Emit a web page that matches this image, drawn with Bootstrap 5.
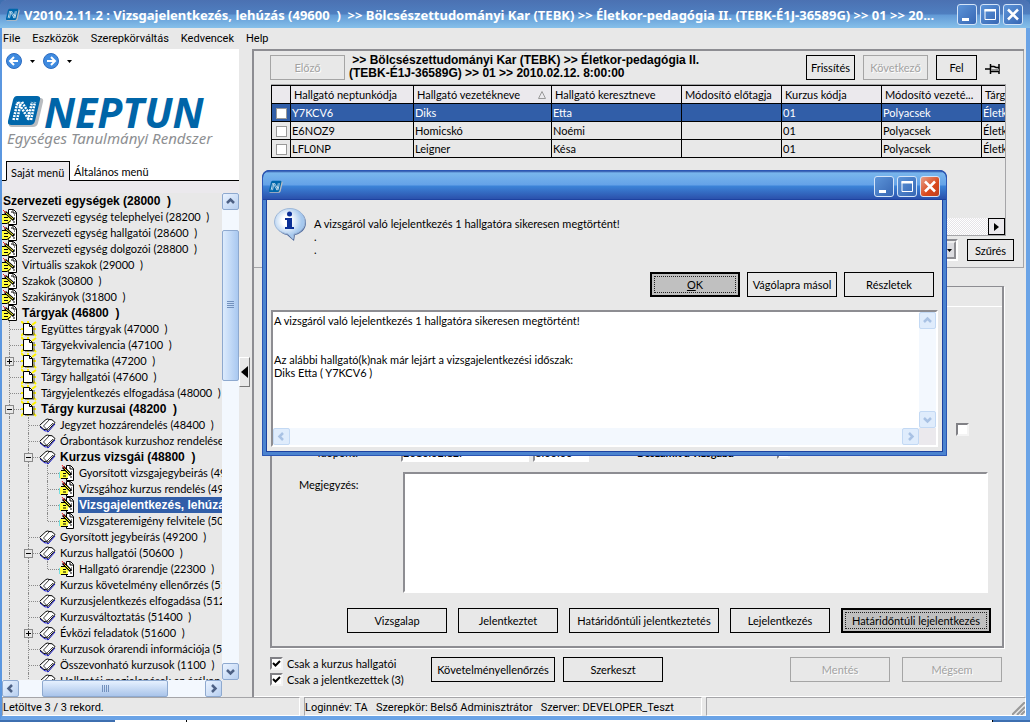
<!DOCTYPE html>
<html lang="hu">
<head>
<meta charset="utf-8">
<meta name="viewport" content="width=device-width, initial-scale=1">
<title>Neptun – Vizsgajelentkezés, lehúzás</title>
<link rel="stylesheet" href="https://cdn.jsdelivr.net/npm/bootstrap@5.3.0/dist/css/bootstrap.min.css">
<script src="https://cdn.jsdelivr.net/npm/bootstrap@5.3.0/dist/js/bootstrap.bundle.min.js"></script>
<style>
:root{--face:#e8e8e8;--panel:#ebe9ed;--shade:#8d8d92;--sel:#315ea8;}
body{font:11px/13px Lato,"Liberation Sans",sans-serif;color:#000;background:#3e6fb0;overflow:hidden}
.win{background:var(--face);border-left:2px solid #5b97e0;border-right:4px solid #6aa3e6;border-bottom:4px solid #6aa3e6;border-radius:8px 8px 0 0;min-height:0}
.win-title{height:28px;margin:0 -4px 0 -2px;padding:2px 7px 0 6px;border-radius:6px 6px 0 0;color:#fff;background:linear-gradient(#4b71b2 0,#4f7fc0 14px,#629ad6 15px,#86c0ea 28px)}
.win-title h1{font:bold 13px/24px "Noto Sans",sans-serif;margin:0;white-space:pre;min-width:0;overflow:hidden}
.ctls{gap:3px}
.ctl{width:20px;height:21px;border:1px solid #d4e4f8;border-radius:3px;padding:0;background:linear-gradient(135deg,#5c94d8,#3767b4);display:block}
.ctl svg{display:block;width:18px;height:19px}
.menubar{height:22px;gap:12px;padding-left:1px;font-family:Roboto,sans-serif}
.menubar a,.side-tabs a{color:#000;text-decoration:none}
.side{width:237px;flex:none}
.side-head{height:114px;background:#fff}
.side-head .ico-btn{background:none;border:0;padding:0;line-height:0}
.brand{padding:2px 0 0 6px}
.brand-name{font:italic bold 41px/32px "Noto Sans",sans-serif;color:#0065a8}
.brand-sub{font:italic 15px/18px "Noto Sans",sans-serif;color:#8d8f92;padding-left:5px;white-space:nowrap}
.side-tabs{background:#fff;height:20px}
.side-tabs>*{border-bottom:1px solid #000;padding:4px 0 0 4px}
.side-tabs .on{border:1px solid #000;border-bottom-color:var(--panel);background:var(--panel);width:64px}
.tree-box{border-top:12px solid var(--panel);min-height:0}
.tree{list-style:none;margin:0;padding:0;overflow:hidden;width:220px;min-height:0}
.tree li{display:flex;height:16px;line-height:16px;white-space:pre}
.tree i{position:relative;flex:none;width:19px;height:16px}
.tree .v::before{content:"";position:absolute;left:7px;top:0;bottom:0;border-left:1px dotted #8a8a8a}
.tree .e::before{bottom:8px}
.tree .h::after{content:"";position:absolute;left:8px;right:0;top:8px;border-top:1px dotted #8a8a8a}
.tree b.x{position:absolute;z-index:1;left:3px;top:4px;width:9px;height:9px;border:1px solid #8a8a8a;background:var(--face)}
.tree b.x::before{content:"";position:absolute;left:1px;top:3px;width:5px;height:1px;background:#000}
.tree b.plus::after{content:"";position:absolute;left:3px;top:1px;width:1px;height:5px;background:#000}
.tree svg{flex:none;width:19px;height:16px;overflow:visible}
.tree span{padding-left:1px}
.tree .strong span{font:bold 12px/16px "Liberation Sans",Arial,sans-serif}
.tree .cur span{background:var(--sel);color:#fff;flex:1 0 auto}
.sb{background:#f3f8fe;flex:none}
.sb.vert{width:17px}.sb.horz{height:17px}
.sb button{width:17px;height:17px;padding:0;border:1px solid #8ea9cf;border-radius:2px;background:linear-gradient(135deg,#eaf3ff,#b7cff0);line-height:0;flex:none;color:#4d6185}
.sb.off button{border-color:#c3d9f4;background:#dfecfc;color:#a9c2e4}
.sb svg{width:15px;height:15px}
.thumb{border:1px solid #8ea9cf;border-radius:2px}
.vert .thumb{background:linear-gradient(90deg,#dcebfd,#a9c8f0);height:151px;margin-top:20px}
.horz .thumb{background:linear-gradient(#e6f1ff,#a9c4ea);width:126px;margin-left:23px}
.side>.horz{width:220px}
.split{width:13px;flex:none}
.split button{width:11px;height:30px;border:1px solid;border-color:#fff #777 #777 #fff;background:var(--face);padding:0;margin-top:308px;line-height:0}
.main{border-top:2px solid var(--shade);border-left:2px solid var(--shade);margin-right:2px;min-width:0}
.top-part{border-right:1px solid #a5a5a8;border-bottom:1px solid #a5a5a8;padding:4px 9px 6px 16px}
.top-row{padding-bottom:4px;margin-right:8px}
.pin{margin:8px 6px 0 8px}
.b{border:1px solid #000;background:var(--face);height:25px;padding:0;font:inherit;color:#000;flex:none}
.b:disabled{border-color:#a5a5a5;color:#a2a2a2;text-shadow:1px 1px #fff}
.b.def{border-width:2px;background:#c0c0c0;outline:1px dotted #222;outline-offset:-5px}
.b.w{width:100px}
.b.xw{width:150px}
.crumb{font:bold 12px/13px "Liberation Sans",Arial,sans-serif;white-space:pre;margin-top:-1px}
.grid-box{border-top:1px solid #a5a5a8;border-right:1px solid #a5a5a8;border-bottom:1px solid #a5a5a8;height:152px;overflow:hidden;margin:0 8px 0 1px}
.grid-box table{table-layout:fixed;width:834px;border-collapse:collapse}
.grid-box th,.grid-box td{border:1px solid #000;height:18px;padding:0 1px;white-space:nowrap;overflow:hidden;line-height:16px;font-weight:normal}
.grid-box th{background:var(--panel);padding-left:3px}
.grid-box .cur td{background:var(--sel);color:#fff}
.grid-box input{appearance:none;display:block;width:11px;height:11px;border:1px solid #999;background:#fff;margin:1px 0 0 3px}
.track{height:17px;background:repeating-conic-gradient(#fff 0 25%,#e6e4e8 0 50%) 0 0/2px 2px}
.track button{width:17px;height:17px;border:1px solid #000;background:var(--panel);padding:0;line-height:0}
.filter-row{padding-top:3px;gap:9px}
.filter{appearance:none;width:300px;height:22px;border:2px solid;border-color:#8d8d92 #fff #fff #8d8d92;border-radius:0;background:#fff}
.combo .arr{position:absolute;right:2px;top:2px;width:13px;height:18px;background:#dcdce0;border:2px solid;border-color:#eee #8d8d92 #8d8d92 #eee;display:flex;align-items:center;justify-content:center}
.sunk{border:2px solid;border-color:#8d8d92 #fff #fff #8d8d92;background:#fff;border-radius:0;padding:0}
.group{margin:18px 20px 0 16px;border:2px solid var(--shade);box-shadow:1px 1px #fff;border-top-width:1px}
.tabline{height:20px;border-bottom:1px solid #fff}
.date-row{padding-top:6px}
.date-row input{height:20px}
.note-row{padding-top:10px}
.note-row label{width:131px;padding:6px 0 0 27px}
.note{height:121px;resize:none;display:block;width:585px}
.act-row{padding:15px 11px 5px 0;gap:11px}
.chk{appearance:none;width:13px;height:13px;margin:0;background:#fff;border:2px solid;border-color:#808085 #f4f4f4 #f4f4f4 #808085;flex:none}
.date-row .chk{height:13px}
.chk:checked{background:#fff url("data:image/svg+xml,%3Csvg xmlns='http://www.w3.org/2000/svg' viewBox='0 0 9 9'%3E%3Cpath d='M1 4l2.500 2.500L8 2' fill='none' stroke='%23000' stroke-width='2'/%3E%3C/svg%3E") center/9px no-repeat}
.foot{padding:9px 22px 7px 16px;border-bottom:1px solid #fff}
.foot label{height:16px}
.status{height:19px;white-space:pre;font-family:Roboto,sans-serif;line-height:19px}
.status>div{border:1px solid;border-color:#a5a5a8 #fff #fff #a5a5a8}
.desk{height:2px;background:#3e6fb0}
.desk div{background:#fff;border-right:1px solid #000}
.dlg{position:absolute;left:262px;top:170px;width:685px;height:286px;background:var(--face);border:4px solid #4b83cf;border-top:0;border-radius:8px 8px 0 0;box-shadow:inset 0 0 0 1px #1d42a0;outline:1px solid #2c56b4;outline-offset:-1px}
.dlg-title{height:30px;margin:0 -4px;padding:5px 6px 0;border-radius:7px 7px 0 0;background:linear-gradient(#2a50a8 0,#79b6ec 2px,#64a2e8 14px,#3c84d8 15px,#2a4da8 29px);border:1px solid #2a50a8;border-bottom-color:#1d42a0}
.dlg .ctl.close{background:linear-gradient(135deg,#e79f88,#d9481c 60%,#c04020)}
.dlg .b{width:90px}
.dlg-text{padding-top:9px}
.dlg-btns{gap:7px;margin:0 9px 13px}
.msg-box{height:137px;margin:0 5px 5px}
.msg-box textarea{border:0;resize:none;padding:2px 0 0 1px;font:inherit;overflow:hidden;outline:0;display:block}
.corner{width:17px;height:17px;background:var(--panel)}
</style>
</head>
<body class="d-flex flex-column vh-100">
<svg width="0" height="0" class="position-absolute" aria-hidden="true">
<symbol id="neptun" viewBox="0 0 36 34"><path d="M10 3h22q4 0 3 4l-5 21q-1 4-5 4H4q-4 0-3-4" fill="#b9bcc0"/><path d="M9 1h20q4 0 3 4l-5 21q-1 4-5 4H3q-4 0-3-4L5 5q1-4 4-4z" fill="#0067ab"/><g fill="none" stroke="#fff" stroke-width="2.500" stroke-dasharray="2 1"><path d="M5.500 25L9.500 7M9 25l4-18M10 7l11 18M14 7l8 13M20 25l4-18M23 25l4-18"/></g></symbol>
<symbol id="hand" viewBox="0 0 19 16"><path d="M6.500 .500h5l3 3v12h-8z" fill="#fff" stroke="#000"/><path d="M11 1v3h3M12 9h1M11 13h2M12 6h1M9 3h1" stroke="#000" fill="none"/><path d="M0 6h4l3 2 2 2-1 4-4 1H0z" fill="#ffff3c"/><path d="M0 5.500h4M2 8.500h4M0 14.500h5l4-3M2 11.500h4" stroke="#000" fill="none"/><path d="M3 3l9 8" stroke="#000" stroke-width="3"/><path d="M4 4l7 6" stroke="#ff3"/><path d="M1 1l3 3" stroke="#e22"/></symbol>
<symbol id="hand2" viewBox="0 0 19 16"><path d="M7.500 .500h4l3 3v12h-7z" fill="#fff" stroke="#000"/><path d="M11 1v3h3M11 12h2M12 7h1M12 9h1" stroke="#000" fill="none"/><path d="M1 6h5l4 3-2 5H1z" fill="#ffff3c"/><path d="M2 5.500h4M4 8.500h3M2 13.500h7M4 11h3" stroke="#000" fill="none"/><path d="M-.500 7v6" stroke="#00d8d8" stroke-width="2"/><path d="M4 2l8 8" stroke="#000" stroke-width="3"/><path d="M5 3l6 6" stroke="#ff3"/><path d="M3 0l3 4" stroke="#e22"/></symbol>
<symbol id="page" viewBox="0 0 19 16"><path d="M0 0l4 4M7 0v3M15 1l-4 3M0 8h4M11 8h4M0 15l4-4M7 15v-3M15 15l-4-4" stroke="#fff200" stroke-width="2"/><path d="M4 14h9V5" fill="none" stroke="#555"/><path d="M2.500 2.500h6l3 3v8h-9z" fill="#fff" stroke="#000"/><path d="M8.500 2.500v3h3" fill="none" stroke="#000"/></symbol>
<symbol id="book" viewBox="0 0 19 16"><path d="M0 10l5 4q1-1 3 1l7-8" fill="none" stroke="#1111c8"/><path d="M-.500 8.500L6 2.500q2-1 3 0 3-1 6 3l-7 8q-2-2-4-1z" fill="#fff" stroke="#000"/><path d="M9 3L3.500 9l4 4M13 6l-6 6" fill="none" stroke="#444"/></symbol>
<symbol id="up" viewBox="0 0 15 15"><path d="M4 9l3.500-3.500L11 9" fill="none" stroke="currentColor" stroke-width="2.500"/></symbol>
<symbol id="down" viewBox="0 0 15 15"><path d="M4 6l3.500 3.500L11 6" fill="none" stroke="currentColor" stroke-width="2.500"/></symbol>
<symbol id="left" viewBox="0 0 15 15"><path d="M9 4L5.500 7.500 9 11" fill="none" stroke="currentColor" stroke-width="2.500"/></symbol>
<symbol id="right" viewBox="0 0 15 15"><path d="M6 4l3.500 3.500L6 11" fill="none" stroke="currentColor" stroke-width="2.500"/></symbol>
<symbol id="min" viewBox="0 0 18 19"><path d="M4 13h7v3H4z" fill="#fff"/></symbol>
<symbol id="max" viewBox="0 0 18 19"><path d="M4 4.500h10.500v10H4z" fill="none" stroke="#fff"/><path d="M3.500 4h11.500v2.500H3.500z" fill="#fff"/></symbol>
<symbol id="cls" viewBox="0 0 18 19"><path d="M4 4.500l10 10M14 4.500l-10 10" stroke="#fff" stroke-width="2.500"/></symbol>
</svg>

<div class="win d-flex flex-column flex-grow-1">
 <header class="win-title d-flex align-items-center">
  <svg width="14" height="14" class="flex-shrink-0 me-1"><use href="#neptun"/></svg>
  <h1 class="flex-grow-1">V2010.2.11.2 : Vizsgajelentkezés, lehúzás (49600  )  &gt;&gt; Bölcsészettudományi Kar (TEBK) &gt;&gt; Életkor-pedagógia II. (TEBK-É1J-36589G) &gt;&gt; 01 &gt;&gt; 20...</h1>
  <div class="ctls d-flex ps-1">
   <button class="ctl" aria-label="Kis méret"><svg><use href="#min"/></svg></button>
   <button class="ctl" aria-label="Teljes méret"><svg><use href="#max"/></svg></button>
   <button class="ctl" aria-label="Bezárás"><svg><use href="#cls"/></svg></button>
  </div>
 </header>
 <nav class="menubar d-flex align-items-center"><a href="#">File</a><a href="#">Eszközök</a><a href="#">Szerepkörváltás</a><a href="#">Kedvencek</a><a href="#">Help</a></nav>

 <div class="d-flex flex-grow-1 overflow-hidden">
  <aside class="side d-flex flex-column">
   <div class="side-head">
    <div class="d-flex align-items-center ps-1 pt-1">
     <button class="ico-btn" aria-label="Vissza"><svg width="16" height="16"><circle cx="8" cy="8" r="7.500" fill="#3f8be0" stroke="#2d6cc0"/><path d="M12 8H4.500M8 4L4 8l4 4" fill="none" stroke="#fff" stroke-width="2"/></svg></button>
     <svg width="5" height="3" class="mx-2"><path d="M0 0h5L2.500 3z"/></svg>
     <button class="ico-btn" aria-label="Előre"><svg width="16" height="16"><circle cx="8" cy="8" r="7.500" fill="#3f8be0" stroke="#2d6cc0"/><path d="M4 8h7.500M8 4l4 4-4 4" fill="none" stroke="#fff" stroke-width="2"/></svg></button>
     <svg width="5" height="3" class="mx-2"><path d="M0 0h5L2.500 3z"/></svg>
    </div>
    <div class="brand d-flex align-items-center mt-4">
     <svg width="36" height="34"><use href="#neptun"/></svg><div class="brand-name">NEPTUN</div>
    </div>
    <div class="brand-sub">Egységes Tanulmányi Rendszer</div>
   </div>
   <nav class="side-tabs d-flex"><div class="p-0 ps-1"></div><a href="#" class="on">Saját menü</a><a href="#" class="flex-grow-1">Általános menü</a></nav>
   <div class="tree-box d-flex flex-grow-1">
    <ul class="tree">
     <li class="strong"><span>Szervezeti egységek (28000  )</span></li>
     <li><svg><use href="#hand"/></svg><span>Szervezeti egység telephelyei (28200  )</span></li>
     <li><svg><use href="#hand"/></svg><span>Szervezeti egység hallgatói (28600  )</span></li>
     <li><svg><use href="#hand"/></svg><span>Szervezeti egység dolgozói (28800  )</span></li>
     <li><svg><use href="#hand"/></svg><span>Virtuális szakok (29000  )</span></li>
     <li><svg><use href="#hand"/></svg><span>Szakok (30800  )</span></li>
     <li><svg><use href="#hand"/></svg><span>Szakirányok (31800  )</span></li>
     <li class="strong"><svg><use href="#hand"/></svg><span>Tárgyak (46800  )</span></li>
     <li><i class="v h"></i><svg><use href="#page"/></svg><span>Együttes tárgyak (47000  )</span></li>
     <li><i class="v h"></i><svg><use href="#page"/></svg><span>Tárgyekvivalencia (47100  )</span></li>
     <li><i class="v h"><b class="x plus"></b></i><svg><use href="#page"/></svg><span>Tárgytematika (47200  )</span></li>
     <li><i class="v h"></i><svg><use href="#page"/></svg><span>Tárgy hallgatói (47600  )</span></li>
     <li><i class="v h"></i><svg><use href="#page"/></svg><span>Tárgyjelentkezés elfogadása (48000  )</span></li>
     <li class="strong"><i class="v h"><b class="x"></b></i><svg><use href="#page"/></svg><span>Tárgy kurzusai (48200  )</span></li>
     <li><i class="v"></i><i class="v h"></i><svg><use href="#book"/></svg><span>Jegyzet hozzárendelés (48400  )</span></li>
     <li><i class="v"></i><i class="v h"></i><svg><use href="#book"/></svg><span>Órabontások kurzushoz rendelése</span></li>
     <li class="strong"><i class="v"></i><i class="v h"><b class="x"></b></i><svg><use href="#book"/></svg><span>Kurzus vizsgái (48800  )</span></li>
     <li><i class="v"></i><i class="v"></i><i class="v h"></i><svg><use href="#hand2"/></svg><span>Gyorsított vizsgajegybeirás (49</span></li>
     <li><i class="v"></i><i class="v"></i><i class="v h"></i><svg><use href="#hand2"/></svg><span>Vizsgához kurzus rendelés (49</span></li>
     <li class="strong cur"><i class="v"></i><i class="v"></i><i class="v h"></i><svg><use href="#hand2"/></svg><span>Vizsgajelentkezés, lehúzá</span></li>
     <li><i class="v"></i><i class="v"></i><i class="v e h"></i><svg><use href="#hand2"/></svg><span>Vizsgateremigény felvitele (502</span></li>
     <li><i class="v"></i><i class="v h"></i><svg><use href="#book"/></svg><span>Gyorsított jegybeírás (49200  )</span></li>
     <li><i class="v"></i><i class="v h"><b class="x"></b></i><svg><use href="#book"/></svg><span>Kurzus hallgatói (50600  )</span></li>
     <li><i class="v"></i><i class="v"></i><i class="v e h"></i><svg><use href="#hand2"/></svg><span>Hallgató órarendje (22300  )</span></li>
     <li><i class="v"></i><i class="v h"></i><svg><use href="#book"/></svg><span>Kurzus követelmény ellenőrzés (51</span></li>
     <li><i class="v"></i><i class="v h"></i><svg><use href="#book"/></svg><span>Kurzusjelentkezés elfogadása (512</span></li>
     <li><i class="v"></i><i class="v h"></i><svg><use href="#book"/></svg><span>Kurzusváltoztatás (51400  )</span></li>
     <li><i class="v"></i><i class="v h"><b class="x plus"></b></i><svg><use href="#book"/></svg><span>Évközi feladatok (51600  )</span></li>
     <li><i class="v"></i><i class="v h"></i><svg><use href="#book"/></svg><span>Kurzusok órarendi információja (53</span></li>
     <li><i class="v"></i><i class="v h"></i><svg><use href="#book"/></svg><span>Összevonható kurzusok (1100  )</span></li>
     <li><i class="v"></i><i class="v h"></i><svg><use href="#book"/></svg><span>Hallgatói megjelenések az órákon</span></li>
    </ul>
    <div class="sb vert d-flex flex-column">
     <button aria-label="Fel"><svg><use href="#up"/></svg></button>
     <div class="thumb d-flex align-items-center justify-content-center"><svg viewBox="0 0 15 15"><path d="M4 3.500h7M4 5.500h7M4 7.500h7M4 9.500h7" stroke="#7391bd"/></svg></div>
     <button class="mt-auto" aria-label="Le"><svg><use href="#down"/></svg></button>
    </div>
   </div>
   <div class="sb horz d-flex">
    <button aria-label="Balra"><svg><use href="#left"/></svg></button>
    <div class="thumb d-flex align-items-center justify-content-center"><svg viewBox="0 0 15 15"><path d="M4.500 4v7M6.500 4v7M8.500 4v7M10.500 4v7" stroke="#7391bd"/></svg></div>
    <button class="ms-auto" aria-label="Jobbra"><svg><use href="#right"/></svg></button>
   </div>
  </aside>
  <div class="split"><button aria-label="Panel elrejtése"><svg width="7" height="12"><path d="M7 0v12L0 6z"/></svg></button></div>

  <main class="main d-flex flex-column flex-grow-1">
   <section class="top-part">
    <div class="top-row d-flex">
     <button class="b me-1" disabled style="width:75px">Előző</button>
     <div class="crumb flex-grow-1"> &gt;&gt; Bölcsészettudományi Kar (TEBK) &gt;&gt; Életkor-pedagógia II.
(TEBK-É1J-36589G) &gt;&gt; 01 &gt;&gt; 2010.02.12. 8:00:00</div>
     <button class="b" style="width:49px">Frissítés</button>
     <button class="b mx-2" disabled style="width:65px">Következő</button>
     <button class="b" style="width:41px">Fel</button>
     <svg width="15" height="12" class="pin"><path d="M0 6h5M5.500 1v10M14 1v10M6 3.500h3l2 1h3M6 8.500h8" fill="none" stroke="#000" stroke-width="1.500"/><path d="M6 6h8v2H6z" fill="#888"/></svg>
    </div>
    <div class="grid-box d-flex flex-column">
     <table>
      <colgroup><col style="width:19px"><col style="width:123px"><col style="width:138px"><col style="width:130px"><col style="width:100px"><col style="width:100px"><col style="width:100px"><col></colgroup>
      <thead><tr><th></th><th>Hallgató neptunkódja</th><th><span class="d-flex justify-content-between align-items-center">Hallgató vezetékneve<svg width="8" height="8" class="me-1"><path d="M.500 7.500L4 .500l3.500 7z" fill="none" stroke="#999"/></svg></span></th><th>Hallgató keresztneve</th><th>Módosító előtagja</th><th>Kurzus kódja</th><th>Módosító vezeté...</th><th>Tárgy neve</th></tr></thead>
      <tbody>
       <tr class="cur"><td><input type="checkbox" aria-label="Y7KCV6"></td><td>Y7KCV6</td><td>Diks</td><td>Etta</td><td></td><td>01</td><td>Polyacsek</td><td>Életkor-pedagógia</td></tr>
       <tr><td><input type="checkbox" aria-label="E6NOZ9"></td><td>E6NOZ9</td><td>Homicskó</td><td>Noémi</td><td></td><td>01</td><td>Polyacsek</td><td>Életkor-pedagógia</td></tr>
       <tr><td><input type="checkbox" aria-label="LFL0NP"></td><td>LFL0NP</td><td>Leigner</td><td>Késa</td><td></td><td>01</td><td>Polyacsek</td><td>Életkor-pedagógia</td></tr>
      </tbody>
     </table>
     <div class="track mt-auto text-end"><button aria-label="Görgetés jobbra"><svg width="5" height="8"><path d="M0 0v8l5-4z"/></svg></button></div>
    </div>
    <div class="filter-row d-flex justify-content-end">
     <div class="combo position-relative"><select class="filter" aria-label="Szűrő"><option></option></select><span class="arr"><svg width="5" height="3"><path d="M0 0h5L2.500 3z"/></svg></span></div>
     <button class="b" style="width:47px;height:22px">Szűrés</button>
    </div>
   </section>

   <section class="group d-flex flex-column flex-grow-1">
    <div class="tabline"></div>
    <div class="d-flex flex-column flex-grow-1 justify-content-end pb-2">
     <div class="d-flex justify-content-end" style="padding-right:33px"><input type="checkbox" class="chk" aria-label="Jelölés"></div>
     <div class="date-row d-flex align-items-center">
      <label for="d1" class="text-end" style="width:86px;margin-right:43px">Időpont:</label>
      <input id="d1" class="sunk" style="width:128px" value="2010.02.12."><input class="sunk ms-1" style="width:56px" aria-label="Idő" value="8:00:00">
      <label for="c2" class="fw-bold ms-5" style="width:140px">Beszámít a vizsgába</label><input id="c2" type="checkbox" class="chk">
     </div>
     <div class="note-row d-flex">
      <label for="note">Megjegyzés:</label>
      <textarea id="note" class="sunk note"></textarea>
     </div>
     <div class="act-row d-flex justify-content-end">
      <button class="b w">Vizsgalap</button><button class="b w">Jelentkeztet</button><button class="b xw">Határidőntúli jelentkeztetés</button><button class="b w">Lejelentkezés</button><button class="b xw def">Határidőntúli lejelentkezés</button>
     </div>
    </div>
   </section>

   <section class="foot d-flex align-items-start">
    <div class="flex-shrink-0" style="width:161px">
     <label class="d-flex gap-1"><input type="checkbox" class="chk" checked>Csak a kurzus hallgatói</label>
     <label class="d-flex gap-1"><input type="checkbox" class="chk" checked>Csak a jelentkezettek (3)</label>
    </div>
    <button class="b me-2" style="width:124px">Követelményellenőrzés</button><button class="b w">Szerkeszt</button>
    <button class="b w ms-auto me-2" disabled>Mentés</button><button class="b w ms-1" disabled>Mégsem</button>
   </section>
  </main>
 </div>

 <footer class="status d-flex gap-1"><div style="width:298px">Letöltve 3 / 3 rekord.</div><div style="width:398px">Loginnév: TA   Szerepkör: Belső Adminisztrátor   Szerver: DEVELOPER_Teszt</div><div class="flex-grow-1 text-end"><svg width="13" height="13"><path d="M0 13L13 0M5 13l8-8M9 13l4-4" stroke="#999" stroke-width="2"/></svg></div></footer>
</div>
<div class="desk d-flex flex-shrink-0"><div style="width:72px;margin-left:115px"></div><div class="flex-grow-1" style="margin-right:37px"></div></div>

<div class="dlg d-flex flex-column" role="dialog" aria-label="Üzenet">
 <div class="dlg-title d-flex align-items-start">
  <svg width="14" height="14" class="mt-1"><use href="#neptun"/></svg>
  <div class="ctls d-flex ms-auto">
   <button class="ctl" aria-label="Kis méret"><svg><use href="#min"/></svg></button>
   <button class="ctl" aria-label="Teljes méret"><svg><use href="#max"/></svg></button>
   <button class="ctl close" aria-label="Bezárás"><svg><use href="#cls"/></svg></button>
  </div>
 </div>
 <div class="d-flex pt-2 ps-2 flex-grow-1">
  <svg width="32" height="34" class="me-2"><defs><radialGradient id="bub" cx=".4" cy=".4"><stop offset=".3" stop-color="#fff"/><stop offset="1" stop-color="#a6c8ee"/></radialGradient></defs><path d="M17 2C27 2 32 8 32 15c0 6-5 11-11 12l-1 6-7-6C7 26 2 21 2 15" fill="#536ea0"/><path d="M16 .500C25 .500 31 7 31 14c0 6-5 11-11 12l-1 5-5-5C6 25 .500 20 .500 14 .500 7 7 .500 16 .500z" fill="url(#bub)" stroke="#9fb8d8"/><circle cx="15.500" cy="6" r="2.500" fill="#0b2f96"/><path d="M11 10h7v9h2v2h-9v-2h2v-7h-2z" fill="#0b2f96"/></svg>
  <div class="dlg-text">A vizsgáról való lejelentkezés 1 hallgatóra sikeresen megtörtént!<br>.<br>.</div>
 </div>
 <div class="dlg-btns d-flex justify-content-end"><button class="b def"><u>O</u>K</button><button class="b">Vágólapra másol</button><button class="b">Részletek</button></div>
 <div class="msg-box sunk d-flex flex-column">
  <div class="d-flex flex-grow-1">
   <textarea class="flex-grow-1" readonly aria-label="Részletes üzenet">A vizsgáról való lejelentkezés 1 hallgatóra sikeresen megtörtént!


Az alábbi hallgató(k)nak már lejárt a vizsgajelentkezési időszak:
Diks Etta ( Y7KCV6 )</textarea>
   <div class="sb off vert d-flex flex-column justify-content-between"><button aria-label="Fel"><svg><use href="#up"/></svg></button><button aria-label="Le"><svg><use href="#down"/></svg></button></div>
  </div>
  <div class="d-flex"><div class="sb off horz d-flex justify-content-between flex-grow-1"><button aria-label="Balra"><svg><use href="#left"/></svg></button><button aria-label="Jobbra"><svg><use href="#right"/></svg></button></div><div class="corner"></div></div>
 </div>
</div>
</body>
</html>
